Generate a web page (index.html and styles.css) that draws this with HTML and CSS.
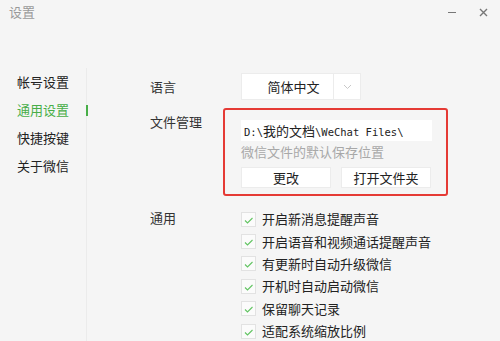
FILE: index.html
```html
<!DOCTYPE html>
<html lang="zh-CN">
<head>
<meta charset="UTF-8">
<meta name="viewport" content="width=device-width, initial-scale=1.0">
<title>设置</title>
<link rel="stylesheet" href="styles.css">
</head>
<body>
  <header class="titlebar">
    <span class="title">设置</span>
    <div class="controls">
      <span class="ctl-min"></span>
      <svg class="ctl-close" width="9" height="9" viewBox="0 0 9 9"><path d="M1 1 L8 8 M8 1 L1 8" stroke="#777" stroke-width="1.4"/></svg>
    </div>
  </header>
  <div class="layout">
    <nav class="sidebar">
      <a href="#" class="nav-item">帐号设置</a>
      <a href="#" class="nav-item active">通用设置</a>
      <a href="#" class="nav-item">快捷按键</a>
      <a href="#" class="nav-item">关于微信</a>
    </nav>
    <main class="content">
      <div class="row">
        <div class="label lang-label">语言</div>
        <div class="select">
          <span class="select-value">简体中文</span>
          <span class="select-arrow">
            <svg width="9" height="6" viewBox="0 0 9 6"><path d="M1 1 L4.5 4.5 L8 1" fill="none" stroke="#c8c8c8" stroke-width="1"/></svg>
          </span>
        </div>
      </div>
      <div class="row">
        <div class="label file-label">文件管理</div>
        <div class="highlight">
          <div class="path-box"><span class="mono">D:\</span>我的文档<span class="mono">\WeChat Files\</span></div>
          <div class="hint">微信文件的默认保存位置</div>
          <div class="btn-row">
            <button class="btn">更改</button>
            <button class="btn">打开文件夹</button>
          </div>
        </div>
      </div>
      <div class="row general">
        <div class="label general-label">通用</div>
        <div class="checks">
          <label class="check"><span class="box"><svg width="9" height="7" viewBox="0 0 9 7"><path d="M1 3.5 L3.5 6 L8.5 1" fill="none" stroke="#62c462" stroke-width="1.1"/></svg></span>开启新消息提醒声音</label>
          <label class="check"><span class="box"><svg width="9" height="7" viewBox="0 0 9 7"><path d="M1 3.5 L3.5 6 L8.5 1" fill="none" stroke="#62c462" stroke-width="1.1"/></svg></span>开启语音和视频通话提醒声音</label>
          <label class="check"><span class="box"><svg width="9" height="7" viewBox="0 0 9 7"><path d="M1 3.5 L3.5 6 L8.5 1" fill="none" stroke="#62c462" stroke-width="1.1"/></svg></span>有更新时自动升级微信</label>
          <label class="check"><span class="box"><svg width="9" height="7" viewBox="0 0 9 7"><path d="M1 3.5 L3.5 6 L8.5 1" fill="none" stroke="#62c462" stroke-width="1.1"/></svg></span>开机时自动启动微信</label>
          <label class="check"><span class="box"><svg width="9" height="7" viewBox="0 0 9 7"><path d="M1 3.5 L3.5 6 L8.5 1" fill="none" stroke="#62c462" stroke-width="1.1"/></svg></span>保留聊天记录</label>
          <label class="check"><span class="box"><svg width="9" height="7" viewBox="0 0 9 7"><path d="M1 3.5 L3.5 6 L8.5 1" fill="none" stroke="#62c462" stroke-width="1.1"/></svg></span>适配系统缩放比例</label>
        </div>
      </div>
    </main>
  </div>
</body>
</html>
```

FILE: styles.css
```css
body {
  margin: 0;
  padding: 0;
  width: 500px;
  height: 341px;
  overflow: hidden;
  background-color: #f5f5f5;
  font-family: "Noto Sans CJK SC", "Noto Sans", sans-serif;
  font-size: 13px;
  color: #333;
}

/* title bar */
.titlebar {
  height: 24px;
  display: flex;
  justify-content: space-between;
  align-items: center;
  padding: 0 12px 0 9px;
}
.title {
  font-size: 13px;
  color: #9a9a9a;
  line-height: 24px;
}
.controls {
  display: flex;
  align-items: center;
  gap: 23px;
}
.ctl-min {
  display: block;
  width: 8px;
  height: 1px;
  background-color: #777;
}

/* main layout */
.layout {
  display: flex;
  margin-top: 44px;
}
.sidebar {
  width: 69px;
  padding-left: 17px;
  border-right: 1px solid #ebebeb;
  height: 273px;
  display: flex;
  flex-direction: column;
}
.nav-item {
  display: block;
  position: relative;
  line-height: 28px;
  color: #222;
  text-decoration: none;
}
.nav-item.active {
  color: #48ae48;
}
.nav-item.active::after {
  content: "";
  position: absolute;
  right: -2px;
  top: 9px;
  width: 2px;
  height: 11px;
  background-color: #48ae48;
}

.content {
  padding: 5px 0 0 63px;
}
.row {
  display: flex;
  align-items: flex-start;
}
.label {
  width: 91px;
  flex-shrink: 0;
  color: #333;
}
.lang-label {
  line-height: 27px;
}
.file-label {
  width: 73px;
  line-height: 21px;
  padding-top: 11px;
}

/* language select */
.select {
  display: flex;
  height: 27px;
  background-color: #fff;
  border: 1px solid #ececec;
  box-sizing: border-box;
}
.select-value {
  width: 92px;
  text-align: center;
  line-height: 25px;
  padding-left: 12px;
  box-sizing: border-box;
  color: #222;
  border-right: 1px solid #ececec;
}
.select-arrow {
  width: 26px;
  display: flex;
  align-items: center;
  justify-content: center;
}

/* highlighted file block */
.highlight {
  margin-top: 8px;
  border: 2px solid #e53a35;
  border-radius: 3px;
  padding: 10px 14px 6px 16px;
}
.path-box {
  width: 191px;
  height: 21px;
  line-height: 21px;
  background-color: #fff;
  box-sizing: border-box;
  padding-left: 3px;
  color: #222;
  font-size: 13px;
  white-space: nowrap;
}
.mono {
  font-family: "DejaVu Sans Mono", "Liberation Mono", monospace;
  font-size: 10.5px;
}
.hint {
  line-height: 21px;
  color: #a8a8a8;
}
.btn-row {
  display: flex;
  gap: 10px;
  margin-top: 5px;
}
.btn {
  width: 90px;
  height: 21px;
  padding: 0;
  background-color: #fff;
  border: 1px solid #ececec;
  font-family: "Noto Sans CJK SC", "Noto Sans", sans-serif;
  font-size: 13px;
  color: #222;
  cursor: pointer;
}

/* general checkboxes */
.general {
  margin-top: 12px;
}
.general-label {
  line-height: 20px;
}
.checks {
  display: flex;
  flex-direction: column;
}
.check {
  display: flex;
  align-items: center;
  height: 22.4px;
  line-height: 18px;
  gap: 6px;
  color: #222;
}
.box {
  width: 15px;
  height: 15px;
  box-sizing: border-box;
  border: 1px solid #e2e2e2;
  background-color: #fbfbfb;
  display: flex;
  align-items: center;
  justify-content: center;
  padding-top: 2px;
}
```
